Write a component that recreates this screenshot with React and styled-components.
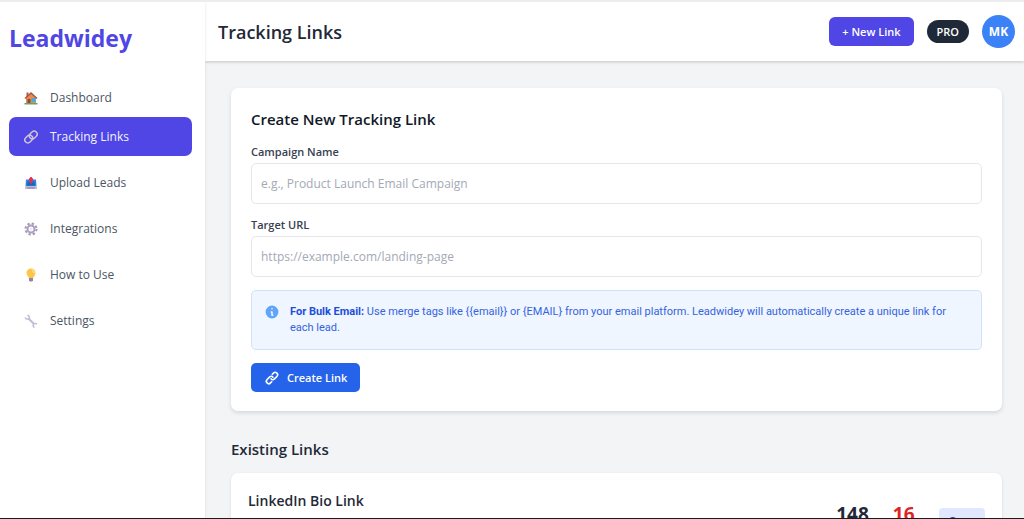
import React, { useState } from 'react';
import styled, { createGlobalStyle } from 'styled-components';
import { HiInformationCircle, HiLink } from 'react-icons/hi';

const HomeIcon = () => (
    <svg width='14' height='14' viewBox='0 0 28 28' aria-hidden='true'>
        <rect x='5' y='3' width='4' height='8' fill='#b5573f' />
        <path d='M4 13 14 5l10 8v12H4z' fill='#f08a4b' />
        <path d='M1 14 14 2l13 12-2 2L14 6 3 16z' fill='#9c5a4a' />
        <rect x='7' y='16' width='6' height='9' fill='#8a4a45' />
        <rect x='15' y='14' width='8' height='8' fill='#4aa8e8' />
        <path d='M1 24h26v3H1z' fill='#5da86a' />
    </svg>
);

const ChainIcon = () => (
    <svg width='14' height='14' viewBox='0 0 28 28' fill='none' stroke='#cdc5d6' strokeWidth='3' aria-hidden='true'>
        <rect x='10' y='4' width='17' height='12' rx='6' transform='rotate(-45 18.5 10)' />
        <rect x='1' y='12' width='17' height='12' rx='6' transform='rotate(-45 9.5 18)' />
    </svg>
);

const OutboxIcon = () => (
    <svg width='14' height='14' viewBox='0 0 28 28' aria-hidden='true'>
        <path d='M4 7h20l1 14H3z' fill='#2f86e0' />
        <path d='M7 11h14l1 8H6z' fill='#1768bd' />
        <path d='M2 21h24v5H2z' fill='#c8b9da' />
        <path d='M6 23h16v2H6z' fill='#8f7ba8' />
        <path d='M12 14V7h-2l4-5 4 5h-2v7z' fill='#e8304f' stroke='#e8304f' strokeWidth='2' />
    </svg>
);

const GearIcon = () => (
    <svg width='14' height='14' viewBox='0 0 28 28' fill='none' aria-hidden='true'>
        <circle cx='14' cy='14' r='11' stroke='#a394b8' strokeWidth='4' strokeDasharray='4.6 4.04' />
        <circle cx='14' cy='14' r='7' stroke='#ad9fc2' strokeWidth='4' />
        <circle cx='14' cy='14' r='3' fill='#eee8f5' />
    </svg>
);

const BulbIcon = () => (
    <svg width='14' height='14' viewBox='0 0 28 28' aria-hidden='true'>
        <path d='M14 1a9 9 0 0 0-9 9c0 4 3 6 5 10h8c2-4 5-6 5-10a9 9 0 0 0-9-9z' fill='#fcc64b' />
        <path d='M16 4c3 1 4 3 4 6' stroke='#fff3c4' strokeWidth='2' fill='none' />
        <path d='M10 20h8v5l-2 2h-4l-2-2z' fill='#96839f' />
    </svg>
);

const WrenchIcon = () => (
    <svg width='14' height='14' viewBox='0 0 28 28' fill='none' stroke='#c6b9d6' aria-hidden='true'>
        <path d='m9 9 11 11' strokeWidth='4' />
        <path d='M7 2c4 2 5 5 3 7s-6 2-8-2' strokeWidth='3' />
        <path d='M26 20c-3-2-6-1-7 1s0 5 2 6' strokeWidth='3' />
    </svg>
);

const navItems = [
    { label: 'Dashboard', icon: <HomeIcon /> },
    { label: 'Tracking Links', icon: <ChainIcon /> },
    { label: 'Upload Leads', icon: <OutboxIcon /> },
    { label: 'Integrations', icon: <GearIcon /> },
    { label: 'How to Use', icon: <BulbIcon /> },
    { label: 'Settings', icon: <WrenchIcon /> },
];

const App = () => {
    const [campaign, setCampaign] = useState('');
    const [targetUrl, setTargetUrl] = useState('');

    const onSubmit = (e) => {
        e.preventDefault();
    }

    return (
        <Shell>
            <GlobalStyle />
            <Sidebar>
                <Logo>Leadwidey</Logo>
                <Nav>
                    {navItems.map(({ label, icon }) => (
                        <NavLink key={label} href='#' $active={label === 'Tracking Links'}>
                            {icon}
                            {label}
                        </NavLink>
                    ))}
                </Nav>
            </Sidebar>
            <Page>
                <Header>
                    <PageTitle>Tracking Links</PageTitle>
                    <NewLinkButton type='button'>+ New Link</NewLinkButton>
                    <Plan>PRO</Plan>
                    <Avatar>MK</Avatar>
                </Header>
                <Content>
                    <FormCard onSubmit={onSubmit}>
                        <CardTitle>Create New Tracking Link</CardTitle>
                        <Field>
                            <label htmlFor='campaign'>Campaign Name</label>
                            <input
                                id='campaign'
                                type='text'
                                placeholder='e.g., Product Launch Email Campaign'
                                value={campaign}
                                onChange={(e) => setCampaign(e.target.value)}
                            />
                        </Field>
                        <Field>
                            <label htmlFor='targetUrl'>Target URL</label>
                            <input
                                id='targetUrl'
                                type='url'
                                placeholder='https://example.com/landing-page'
                                value={targetUrl}
                                onChange={(e) => setTargetUrl(e.target.value)}
                            />
                        </Field>
                        <Info>
                            <HiInformationCircle size={16} />
                            <p>
                                <strong>For Bulk Email:</strong>
                                {' Use merge tags like {{email}} or {EMAIL} from your email platform. Leadwidey will automatically create a unique link for each lead.'}
                            </p>
                        </Info>
                        <CreateButton type='submit'>
                            <HiLink size={16} />
                            Create Link
                        </CreateButton>
                    </FormCard>
                    <SectionTitle>Existing Links</SectionTitle>
                    <LinkCard>
                        <LinkName>LinkedIn Bio Link</LinkName>
                        <LinkStats>
                            <Stat>148</Stat>
                            <Stat $color='#dc2626'>16</Stat>
                            <CopyButton type='button'>Copy</CopyButton>
                        </LinkStats>
                    </LinkCard>
                </Content>
            </Page>
        </Shell>
    )
};

const GlobalStyle = createGlobalStyle`
    * {
        box-sizing: border-box;
    }
    body {
        margin: 0;
        background-color: #fff;
        font-family: 'Open Sans', 'Noto Sans', sans-serif;
        font-size: 12px;
        color: #1f2937;
    }
    h1, h2, h3, p {
        margin: 0;
    }
    button, input {
        font-family: inherit;
    }
    button {
        border: none;
        cursor: pointer;
    }
`;

const Shell = styled.div`
    display: flex;
    height: 100vh;
    overflow: hidden;
    border-top: 2px solid #ededee;
    border-bottom: 1px solid #1c1c1e;
`;

const Sidebar = styled.aside`
    position: relative;
    z-index: 1;
    flex: 0 0 205px;
    padding: 16px 13px 0 9px;
    background-color: #fff;
    box-shadow: 1px 0 2px rgba(0, 0, 0, 0.06);
`;

const Logo = styled.div`
    font-size: 23px;
    line-height: 40px;
    font-weight: 700;
    color: #4f46e5;
`;

const Nav = styled.nav`
    display: flex;
    flex-direction: column;
    gap: 7px;
    margin-top: 20px;
`;

const NavLink = styled.a`
    display: flex;
    align-items: center;
    gap: 12px;
    height: 39px;
    padding: 0 15px;
    border-radius: 7px;
    color: ${({ $active }) => ($active ? '#f3f2ff' : '#4b5563')};
    background-color: ${({ $active }) => ($active ? '#4f46e5' : 'transparent')};
    text-decoration: none;
    &:first-child {
        margin-bottom: -7px;
    }
`;

const Page = styled.div`
    flex: 1;
    min-width: 0;
    display: flex;
    flex-direction: column;
    background-color: #f3f4f6;
`;

const Header = styled.header`
    position: relative;
    display: flex;
    align-items: center;
    gap: 13px;
    flex: 0 0 59px;
    padding: 0 9px 0 13px;
    background-color: #fff;
    box-shadow: 0 1px 3px rgba(0, 0, 0, 0.2);
`;

const PageTitle = styled.h1`
    flex: 1;
    font-size: 18px;
    line-height: 26px;
    font-weight: 600;
`;

const NewLinkButton = styled.button`
    height: 29px;
    padding: 0 13px;
    border-radius: 6px;
    background-color: #4f46e5;
    color: #fff;
    font-size: 11px;
    font-weight: 600;
`;

const Plan = styled.span`
    padding: 0 10px;
    border-radius: 12px;
    background-color: #1f2937;
    color: #fff;
    font-size: 11px;
    line-height: 23px;
    font-weight: 600;
`;

const Avatar = styled.span`
    width: 33px;
    border-radius: 50%;
    background-color: #3b82f6;
    color: #fff;
    font-size: 12px;
    line-height: 33px;
    font-weight: 700;
    text-align: center;
`;

const Content = styled.main`
    flex: 1;
    min-height: 0;
    padding: 27px 22px 26px 26px;
    overflow-y: auto;
    scrollbar-width: none;
`;

const FormCard = styled.form`
    display: flex;
    flex-direction: column;
    gap: 13px;
    padding: 19px 20px;
    border-radius: 7px;
    background-color: #fff;
    box-shadow: 0 2px 4px rgba(0, 0, 0, 0.12);
`;

const CardTitle = styled.h2`
    font-size: 15px;
    line-height: 24px;
    font-weight: 600;
    color: #111827;
`;

const Field = styled.div`
    display: flex;
    flex-direction: column;
    gap: 3px;
    label {
        font-size: 11px;
        line-height: 16px;
        font-weight: 600;
        color: #374151;
    }
    input {
        width: 100%;
        height: 41px;
        padding: 0 9px;
        border: 1px solid #e5e7eb;
        border-radius: 5px;
        background-color: #fff;
        color: #1f2937;
        font-size: 12px;
    }
    input::placeholder {
        color: #a3a9b5;
    }
`;

const Info = styled.div`
    display: flex;
    gap: 10px;
    padding: 13px 12px;
    border: 1px solid #cfe2fd;
    border-radius: 5px;
    background-color: #eff6ff;
    color: #3563e0;
    font-family: Roboto, 'Open Sans', sans-serif;
    font-size: 11px;
    line-height: 16px;
    svg {
        flex: none;
        color: #60a5fa;
    }
    strong {
        font-weight: 700;
        color: #1d4ed8;
    }
`;

const CreateButton = styled.button`
    display: flex;
    align-items: center;
    align-self: flex-start;
    gap: 7px;
    height: 29px;
    padding: 0 13px;
    border-radius: 5px;
    background-color: #2563eb;
    color: #fff;
    font-size: 11px;
    font-weight: 600;
`;

const SectionTitle = styled.h2`
    margin: 25px 0 11px;
    font-size: 15px;
    line-height: 26px;
    font-weight: 600;
`;

const LinkCard = styled.section`
    display: flex;
    justify-content: space-between;
    padding: 16px 17px;
    border-radius: 7px;
    background-color: #fff;
    box-shadow: 0 1px 3px rgba(0, 0, 0, 0.12);
`;

const LinkName = styled.h3`
    font-size: 14px;
    line-height: 24px;
    font-weight: 600;
`;

const LinkStats = styled.div`
    display: flex;
    align-items: flex-start;
    gap: 24px;
    padding-top: 12px;
`;

const Stat = styled.strong`
    font-size: 19px;
    line-height: 26px;
    font-weight: 700;
    color: ${({ $color }) => $color || '#1f2937'};
`;

const CopyButton = styled.button`
    height: 24px;
    margin-top: 7px;
    padding: 0 10px;
    border-radius: 4px;
    background-color: #e0e7ff;
    color: #4338ca;
    font-size: 11px;
    font-weight: 600;
`;

export default App;
